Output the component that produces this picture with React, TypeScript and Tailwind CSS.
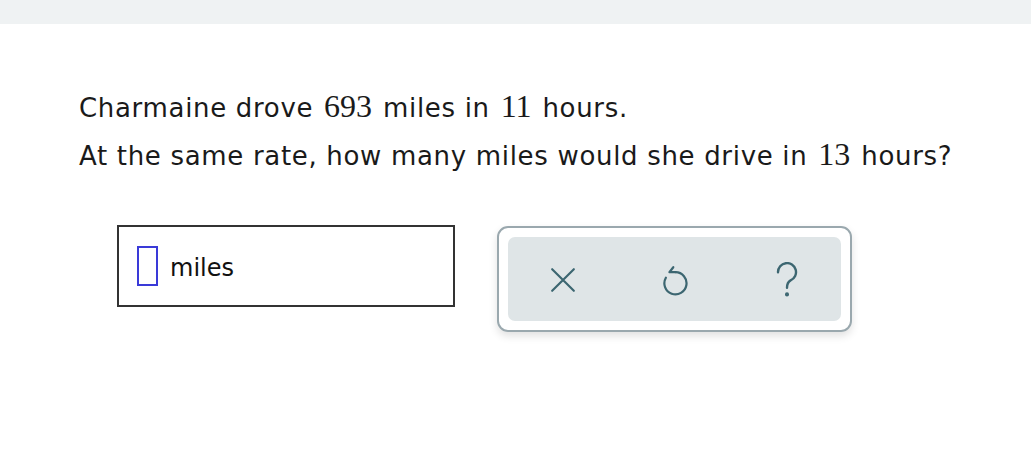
import React from "react";

function Num({ children }: { children: React.ReactNode }) {
  return (
    <span className="mx-[2px] font-['Liberation_Serif',serif] text-[32px] leading-none tracking-normal">{children}</span>
  );
}

export default function App() {
  return (
    <div className="min-h-screen w-full bg-white font-['DejaVu_Sans',sans-serif] text-[#1a1a1a]">
      <div className="h-6 w-full bg-[#eff2f3]" />
      <div className="pl-[79px] pt-[60px] tracking-[0.68px]">
        <p className="text-[26px] leading-[48px] h-[48px]">
          Charmaine drove <Num>693</Num> miles in <Num>11</Num> hours.
        </p>
        <p className="text-[26px] leading-[48px] h-[48px]">
          At the same rate, how many miles would she drive in <Num>13</Num> hours?
        </p>
      </div>
      <div className="flex items-start pl-[117px] pt-[45px] gap-[42px]">
        <div className="w-[338px] h-[82px] border-2 border-[#333] flex items-center pl-[18px] gap-[12px]">
          <div className="w-[21px] h-[40px] border-2 border-[#3a3ad8]" />
          <span className="text-[24px] text-[#111] mt-[4px]">miles</span>
        </div>
        <div className="mt-px w-[355px] h-[106px] rounded-[11px] border-2 border-[#9aa8ae] p-[9px] shadow-[0_4px_8px_rgba(0,0,0,0.12)]">
          <div className="h-full w-full rounded-[7px] bg-[#dfe5e7] flex items-center justify-center gap-[86px] pt-[2px] text-[#3c6671]">
            <svg width="26" height="26" viewBox="0 0 24 24" fill="none" stroke="currentColor" strokeWidth="2" strokeLinecap="round">
              <path d="M2 2L22 22M22 2L2 22" />
            </svg>
            <svg width="27" height="31" viewBox="0 0 24 28" fill="none" stroke="currentColor" strokeWidth="2" strokeLinecap="round" strokeLinejoin="round">
              <path d="M12 6.5A10 10 0 1 1 3.3 11.5" />
              <path d="M10 2L6.5 6.5L12 6.5" />
            </svg>
            <svg width="24" height="36" viewBox="0 0 20 30" fill="none" stroke="currentColor" strokeWidth="2" strokeLinecap="round">
              <path d="M2.5 8.5A7.5 7.5 0 1 1 13 15.3C10.8 16.6 10 18 10 21.5" />
              <circle cx="10" cy="27" r="0.7" fill="currentColor" strokeWidth="2" />
            </svg>
          </div>
        </div>
      </div>
    </div>
  );
}
